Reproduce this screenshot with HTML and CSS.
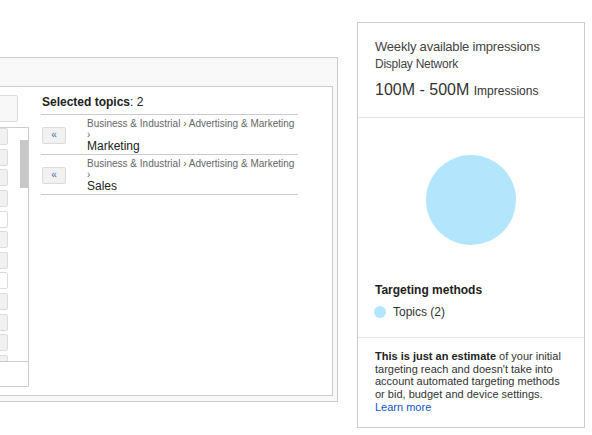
FILE: index.html
```html
<!DOCTYPE html>
<html>
<head>
<meta charset="utf-8">
<title>Topics targeting</title>
<link rel="stylesheet" href="styles.css">
</head>
<body>
<div class="page">
  <section class="picker">
    <div class="picker-head"></div>
    <div class="picker-body">
      <div class="tree-col">
        <div class="search"></div>
        <div class="tree">
          <div class="tree-scroll">
            <div class="tree-rows">
              <div class="tree-row"><span class="add"></span></div>
              <div class="tree-row"><span class="add"></span></div>
              <div class="tree-row"><span class="add"></span></div>
              <div class="tree-row"><span class="add"></span></div>
              <div class="tree-row"><span class="add add-off"></span></div>
              <div class="tree-row"><span class="add"></span></div>
              <div class="tree-row"><span class="add"></span></div>
              <div class="tree-row"><span class="add add-off"></span></div>
              <div class="tree-row"><span class="add"></span></div>
              <div class="tree-row"><span class="add"></span></div>
              <div class="tree-row"><span class="add"></span></div>
              <div class="tree-row"><span class="add"></span></div>
            </div>
            <div class="scrollbar"><div class="thumb"></div></div>
          </div>
          <div class="tree-foot"></div>
        </div>
      </div>
      <div class="selected-col">
        <div class="sel-head"><b>Selected topics</b>: 2</div>
        <div class="sel-row">
          <button class="remove" type="button">«</button>
          <div class="sel-text">
            <div class="crumb">Business &amp; Industrial › Advertising &amp; Marketing ›</div>
            <div class="name">Marketing</div>
          </div>
        </div>
        <div class="sel-row">
          <button class="remove" type="button">«</button>
          <div class="sel-text">
            <div class="crumb">Business &amp; Industrial › Advertising &amp; Marketing ›</div>
            <div class="name">Sales</div>
          </div>
        </div>
      </div>
    </div>
  </section>

  <aside class="reach">
    <div class="reach-head">
      <div class="reach-title">Weekly available impressions</div>
      <div class="reach-net">Display Network</div>
      <div class="reach-range"><span class="range-num">100M - 500M</span> <span class="range-unit">Impressions</span></div>
    </div>
    <div class="reach-chart">
      <div class="pie"></div>
      <div class="methods-title">Targeting methods</div>
      <div class="legend"><span class="legend-dot"></span><span class="legend-label">Topics (2)</span></div>
    </div>
    <div class="reach-note">
      <b>This is just an estimate</b> of your initial targeting reach and doesn't take into account automated targeting methods or bid, budget and device settings.<br>
      <a class="learn" href="#">Learn more</a>
    </div>
  </aside>
</div>
</body>
</html>
```

FILE: styles.css
```css
* { box-sizing: border-box; }

html, body {
  margin: 0;
  padding: 0;
  background: #fff;
  overflow: hidden;
}

body {
  font-family: "Liberation Sans", Arial, sans-serif;
  color: #333;
  width: 592px;
  height: 435px;
}

.page {
  display: flex;
  align-items: flex-start;
}

/* ---------- left: topic picker ---------- */
.picker {
  flex: none;
  width: 700px;
  margin-left: -362px;
  margin-top: 57px;
  border: 1px solid #cccccc;
  background: #f9f9f9;
}

.picker-head {
  height: 28px;
}

.picker-body {
  margin: 0 4px 5px 4px;
  border: 1px solid #cccccc;
  background: #fff;
  padding: 8px 34px 8px 8px;
  display: flex;
}

.tree-col {
  flex: 1;
  min-width: 0;
}

.search {
  height: 27px;
  margin-right: 11px;
  border: 1px solid #dcdcdc;
  border-radius: 2px;
  background: #f8f8f8;
}

.tree {
  margin-top: 5px;
  border: 1px solid #cccccc;
  background: #fff;
}

.tree-scroll {
  height: 233px;
  overflow: hidden;
  display: flex;
}

.tree-rows {
  flex: 1;
  margin-right: 12px;
}

.tree-row {
  height: 20.64px;
  display: flex;
  justify-content: flex-end;
}

.add {
  width: 40px;
  height: 17px;
  border: 1px solid #dcdcdc;
  border-radius: 2px;
  background: #f1f1f1;
}

.add-off {
  background: #fff;
}

.scrollbar {
  width: 8px;
  flex: none;
}

.thumb {
  margin-top: 12px;
  height: 48px;
  background: #c8c8c8;
}

.tree-foot {
  height: 25px;
  border-top: 1px solid #cccccc;
}

.selected-col {
  flex: none;
  width: 257px;
  margin-left: 12px;
}

.sel-head {
  font-size: 12px;
  line-height: 15px;
  color: #222;
  padding: 0 0 4px 1px;
  border-bottom: 1px solid #cccccc;
}

.sel-head b {
  font-weight: bold;
}

.sel-row {
  display: flex;
  align-items: center;
  padding: 3px 0 1px 0;
  border-bottom: 1px solid #cccccc;
}

.remove {
  flex: none;
  width: 24px;
  height: 17px;
  margin: 0 21px 0 1px;
  padding: 0 0 1px 0;
  border: 1px solid #dcdcdc;
  border-radius: 2px;
  background: #f1f1f1;
  color: #4a6db5;
  font-family: "Liberation Sans", Arial, sans-serif;
  font-size: 10px;
  line-height: 14px;
  text-align: center;
}

.sel-text {
  flex: 1;
  min-width: 0;
}

.crumb {
  font-size: 10px;
  line-height: 11px;
  color: #666;
}

.name {
  font-size: 12px;
  line-height: 13px;
  color: #222;
}

/* ---------- right: reach panel ---------- */
.reach {
  flex: none;
  width: 228px;
  margin-left: 19px;
  margin-top: 22px;
  border: 1px solid #cccccc;
  background: #fff;
}

.reach-head {
  padding: 15px 17px 16px 17px;
  border-bottom: 1px solid #e5e5e5;
}

.reach-title {
  font-size: 13px;
  line-height: 18px;
  letter-spacing: -0.2px;
  color: #444;
}

.reach-net {
  font-size: 12px;
  line-height: 16px;
  letter-spacing: -0.25px;
  color: #444;
}

.reach-range {
  margin-top: 8px;
  line-height: 20px;
  color: #333;
  white-space: nowrap;
}

.range-num {
  font-size: 16px;
}

.range-unit {
  font-size: 12px;
}

.reach-chart {
  padding: 37px 17px 15px 17px;
  border-bottom: 1px solid #e5e5e5;
}

.pie {
  width: 90px;
  height: 90px;
  margin: 0 auto;
  border-radius: 50%;
  background: #b3e5fc;
}

.methods-title {
  margin-top: 37px;
  font-size: 12px;
  line-height: 16px;
  font-weight: bold;
  color: #222;
}

.legend {
  margin-top: 6px;
  margin-bottom: 2px;
  display: flex;
  align-items: center;
  height: 16px;
}

.legend-dot {
  width: 12px;
  height: 12px;
  margin: 0 7px 1px -1px;
  border-radius: 50%;
  background: #b3e5fc;
}

.legend-label {
  font-size: 12px;
  line-height: 16px;
  color: #333;
}

.reach-note {
  padding: 12px 17px 13px 17px;
  font-size: 11px;
  line-height: 12.7px;
  color: #333;
}

.reach-note b {
  color: #222;
}

.learn {
  color: #1155cc;
  text-decoration: none;
}
```
